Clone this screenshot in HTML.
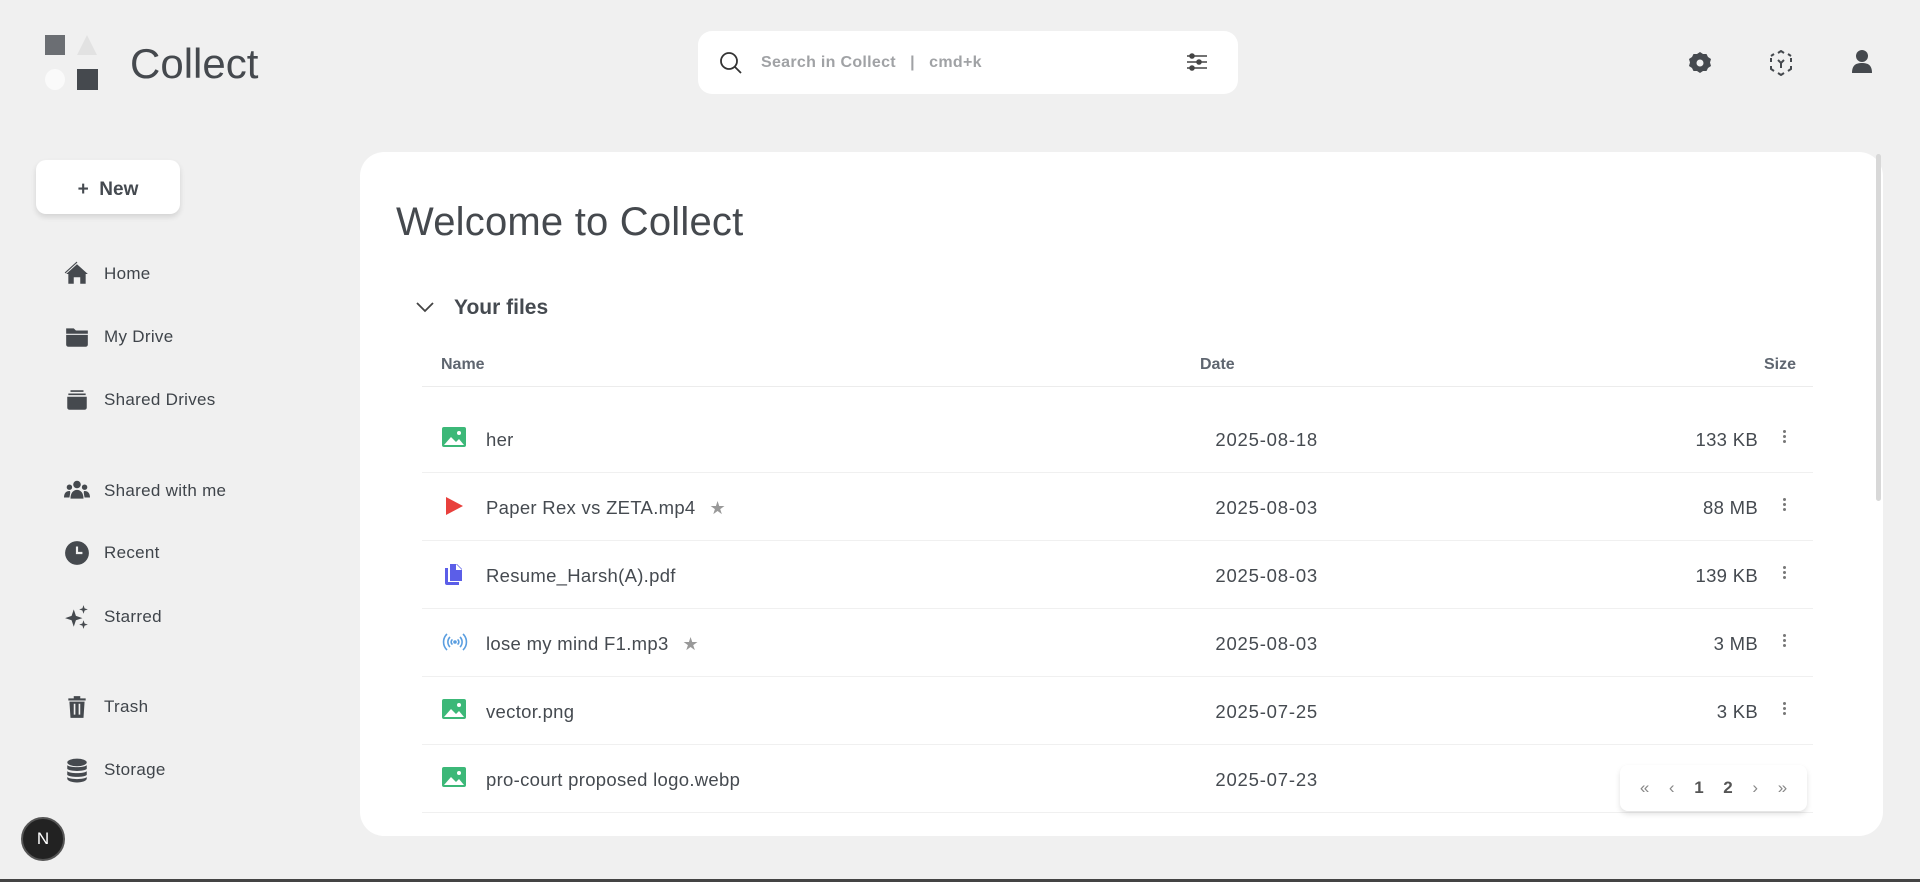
<!DOCTYPE html>
<html><head><meta charset="utf-8"><style>
*{box-sizing:border-box;margin:0;padding:0}
body{width:1920px;height:882px;background:#f0f0f0;font-family:"Liberation Sans",sans-serif;color:#454a50;position:relative;overflow:hidden}
.abs{position:absolute}
.nav{position:absolute;left:64px;display:flex;align-items:center;font-size:17px;height:30px;letter-spacing:0.3px;color:#3f444a}
.nav svg{width:26px;height:26px;margin-right:14px}
.row{position:absolute;left:422px;width:1391px;height:68px;border-bottom:1px solid #f0f0f0;font-size:18.5px;letter-spacing:0.3px}
.row .ic{position:absolute;left:20px;top:22px}
.row .nm{position:absolute;left:64px;top:24px;display:flex;align-items:center}
.row .dt{position:absolute;right:495px;top:24px;letter-spacing:0.8px}
.row .sz{position:absolute;right:55px;top:24px}
.row .kb{position:absolute;right:26px;top:23px;width:4px}
.kb i{display:block;width:3px;height:3px;background:#777;border-radius:50%;margin:2px 0}
</style></head><body>
<div class="abs" style="left:45px;top:35px;width:20px;height:20px;background:#6b6e73"></div>
<div class="abs" style="left:77px;top:35px;width:0;height:0;border-left:10px solid transparent;border-right:10px solid transparent;border-bottom:20px solid #e2e2e2"></div>
<div class="abs" style="left:45px;top:69px;width:20px;height:21px;background:#fafafa;border-radius:50%"></div>
<div class="abs" style="left:77px;top:69px;width:21px;height:21px;background:#45494e"></div>
<div class="abs" style="left:130px;top:40px;font-size:42px;color:#45494e">Collect</div>
<div class="abs" style="left:698px;top:31px;width:540px;height:63px;background:#fff;border-radius:14px">
<svg class="abs" style="left:20px;top:19px" width="26" height="26" viewBox="0 0 26 26" fill="none" stroke="#333" stroke-width="1.8"><circle cx="11" cy="11" r="8"/><path d="M17 17l6 6"/></svg>
<div class="abs" style="left:63px;top:23px;font-size:16px;color:#a0a2a5;font-weight:bold;white-space:pre;letter-spacing:0.3px">Search in Collect   |   cmd+k</div>
<svg class="abs" style="left:488px;top:21px" width="22" height="20" viewBox="0 0 22 20" stroke="#444" stroke-width="1.6"><path d="M1 4h3M8 4h13M1 10h10M15 10h6M1 16h3M8 16h13"/><circle cx="6" cy="4" r="2" fill="#444"/><circle cx="13" cy="10" r="2" fill="#444"/><circle cx="6" cy="16" r="2" fill="#444"/></svg>
</div>
<svg class="abs" style="left:1688px;top:51px" width="24" height="24" viewBox="0 0 24 24"><path fill="#45494e" fill-rule="evenodd" d="M12 1l3 2 3.5 0 1.5 3 3 2-1 3.5 1 3.5-3 2-1.5 3-3.5 0-3 2-3-2-3.5 0-1.5-3-3-2 1-3.5-1-3.5 3-2 1.5-3 3.5 0zM12 8.5a3.5 3.5 0 100 7 3.5 3.5 0 000-7z"/></svg>
<svg class="abs" style="left:1768px;top:50px" width="26" height="26" viewBox="0 0 26 26" fill="none" stroke="#45494e" stroke-width="2"><path d="M10 3l3-2 3 2M3 8v4M23 8v4M3 16v3l3 2M23 16v3l-3 2M10 23l3 2 3-2M3 6l3-2M23 6l-3-2M10 10l3 3 3-3M13 13v5"/></svg>
<svg class="abs" style="left:1850px;top:49px" width="24" height="26" viewBox="0 0 24 26"><circle cx="12" cy="7" r="6" fill="#45494e"/><path d="M2 24c0-8 4-10 10-10s10 2 10 10z" fill="#45494e"/></svg>
<div class="abs" style="left:36px;top:160px;width:144px;height:54px;background:#fff;border-radius:10px;box-shadow:0 3px 6px rgba(0,0,0,.12);font-size:19px;font-weight:bold;text-align:center;line-height:60px">+&nbsp; New</div>
<div class="nav" style="top:259px"><svg viewBox="0 0 24 24"><path fill="#45494e" d="M12 3L2 12h2v9h5v-6h6v6h5v-9h2z"/><path d="M12 1L1 11" stroke="#45494e"/></svg>Home</div>
<div class="nav" style="top:322px"><svg viewBox="0 0 24 24"><path fill="#45494e" d="M2 4h7l2 2h11v3H2zM2 10h20v9a2 2 0 01-2 2H4a2 2 0 01-2-2z"/></svg>My Drive</div>
<div class="nav" style="top:385px"><svg viewBox="0 0 24 24"><path fill="#45494e" d="M6 3h12v1.5H6zM4 6h16v1.5H4zM3 9h18v10a2 2 0 01-2 2H5a2 2 0 01-2-2z"/></svg>Shared Drives</div>
<div class="nav" style="top:476px"><svg viewBox="0 0 24 24" fill="#45494e"><circle cx="12" cy="6" r="3.5"/><circle cx="5" cy="8.5" r="2.5"/><circle cx="19" cy="8.5" r="2.5"/><path d="M6 19c0-5 2.5-8 6-8s6 3 6 8zM0 18c0-4 2-6 5-6 1 0 1 1 0 6zM24 18c0-4-2-6-5-6-1 0-1 1 0 6z"/></svg>Shared with me</div>
<div class="nav" style="top:538px"><svg viewBox="0 0 24 24"><circle cx="12" cy="12" r="11" fill="#45494e"/><path d="M12 6v6h5" stroke="#f0f0f0" stroke-width="2" fill="none"/></svg>Recent</div>
<div class="nav" style="top:602px"><svg viewBox="0 0 24 24" fill="#45494e"><path d="M9 5l2 6 6 2-6 2-2 6-2-6-6-2 6-2zM18 1l1 3 3 1-3 1-1 3-1-3-3-1 3-1zM18 15l1 3 3 1-3 1-1 3-1-3-3-1 3-1z"/></svg>Starred</div>
<div class="nav" style="top:692px"><svg viewBox="0 0 24 24" fill="#45494e"><path d="M4 4h16v2H4zM9 2h6v2H9zM5 7h14l-1 15H6zM9 9v10h1.5V9zM13.5 9v10H15V9z"/></svg>Trash</div>
<div class="nav" style="top:755px"><svg viewBox="0 0 24 24" fill="#45494e"><ellipse cx="12" cy="5" rx="9" ry="3.5"/><path d="M3 7.5c2 2.5 16 2.5 18 0V11c-2 2.5-16 2.5-18 0zM3 13c2 2.5 16 2.5 18 0v3.5c-2 2.5-16 2.5-18 0zM3 18.5c2 2.5 16 2.5 18 0V20c0 2-4 3.5-9 3.5S3 22 3 20z"/></svg>Storage</div>
<div class="abs" style="left:21px;top:817px;width:44px;height:44px;border-radius:50%;background:#222;border:2px solid #555;color:#fff;font-size:17px;text-align:center;line-height:40px">N</div>
<div class="abs" style="left:360px;top:152px;width:1523px;height:684px;background:#fff;border-radius:24px"></div>
<div class="abs" style="left:1876px;top:154px;width:5px;height:347px;background:#d8d8d8;border-radius:3px"></div>
<div class="abs" style="left:396px;top:200px;font-size:40px;color:#45494e;letter-spacing:0.2px">Welcome to Collect</div>
<svg class="abs" style="left:415px;top:300px" width="20" height="14" viewBox="0 0 20 14" fill="none" stroke="#444" stroke-width="1.8"><path d="M2 3l8 8 8-8"/></svg>
<div class="abs" style="left:454px;top:296px;font-size:21px;font-weight:bold">Your files</div>
<div class="abs" style="left:441px;top:356px;font-size:16px;font-weight:bold;color:#5f6670">Name</div>
<div class="abs" style="left:1200px;top:356px;font-size:16px;font-weight:bold;color:#5f6670">Date</div>
<div class="abs" style="left:1740px;top:356px;width:56px;text-align:right;font-size:16px;font-weight:bold;color:#5f6670">Size</div>
<div class="abs" style="left:422px;top:386px;width:1391px;height:1px;background:#ececec"></div>

<div class="row" style="top:405px"><svg class="ic" width="24" height="20" viewBox="0 0 24 20"><rect width="24" height="20" rx="2" fill="#3cb878"/><path d="M2 18l7-8 5 5 3-3 5 6z" fill="#fff"/><circle cx="17" cy="6" r="2" fill="#fff"/></svg><div class="nm">her</div><div class="dt">2025-08-18</div><div class="sz">133 KB</div><div class="kb"><i></i><i></i><i></i></div></div>
<div class="row" style="top:473px"><svg class="ic" width="24" height="22" viewBox="0 0 24 22"><path d="M4 2l17 9-17 9z" fill="#e8403c"/></svg><div class="nm">Paper Rex vs ZETA.mp4 <span style="color:#999;margin-left:14px;font-size:18px">★</span></div><div class="dt">2025-08-03</div><div class="sz">88 MB</div><div class="kb"><i></i><i></i><i></i></div></div>
<div class="row" style="top:541px"><svg class="ic" width="24" height="24" viewBox="0 0 24 24"><path d="M3 5h3v14h11v3H5a2 2 0 01-2-2z" fill="#5b5ee8"/><path d="M8 1h7l5 5v12H8z" fill="#5b5ee8"/><path d="M14 1v6h6" fill="#fff"/></svg><div class="nm">Resume_Harsh(A).pdf</div><div class="dt">2025-08-03</div><div class="sz">139 KB</div><div class="kb"><i></i><i></i><i></i></div></div>
<div class="row" style="top:609px"><svg class="ic" width="26" height="22" viewBox="0 0 26 22" fill="none" stroke="#5a9ee0" stroke-width="1.6"><path d="M5 3a11 11 0 000 16M21 3a11 11 0 010 16M8 6a7 7 0 000 10M18 6a7 7 0 010 10M10.5 8.5a3 3 0 000 5M15.5 8.5a3 3 0 010 5"/><circle cx="13" cy="11" r="1" fill="#5a9ee0"/></svg><div class="nm">lose my mind F1.mp3 <span style="color:#999;margin-left:14px;font-size:18px">★</span></div><div class="dt">2025-08-03</div><div class="sz">3 MB</div><div class="kb"><i></i><i></i><i></i></div></div>
<div class="row" style="top:677px"><svg class="ic" width="24" height="20" viewBox="0 0 24 20"><rect width="24" height="20" rx="2" fill="#3cb878"/><path d="M2 18l7-8 5 5 3-3 5 6z" fill="#fff"/><circle cx="17" cy="6" r="2" fill="#fff"/></svg><div class="nm">vector.png</div><div class="dt">2025-07-25</div><div class="sz">3 KB</div><div class="kb"><i></i><i></i><i></i></div></div>
<div class="row" style="top:745px"><svg class="ic" width="24" height="20" viewBox="0 0 24 20"><rect width="24" height="20" rx="2" fill="#3cb878"/><path d="M2 18l7-8 5 5 3-3 5 6z" fill="#fff"/><circle cx="17" cy="6" r="2" fill="#fff"/></svg><div class="nm">pro-court proposed logo.webp</div><div class="dt">2025-07-23</div></div>
<div class="abs" style="left:1620px;top:765px;width:187px;height:46px;background:#fff;border-radius:8px;box-shadow:0 3px 6px rgba(0,0,0,.12);display:flex;align-items:center;justify-content:space-around;padding:0 10px;font-size:17px;color:#666">
<span style="color:#888">«</span><span style="color:#888">‹</span><b style="color:#555">1</b><b style="color:#555">2</b><span style="color:#888">›</span><span style="color:#888">»</span></div>
<div class="abs" style="left:0;top:879px;width:1920px;height:3px;background:#444"></div>
</body></html>
